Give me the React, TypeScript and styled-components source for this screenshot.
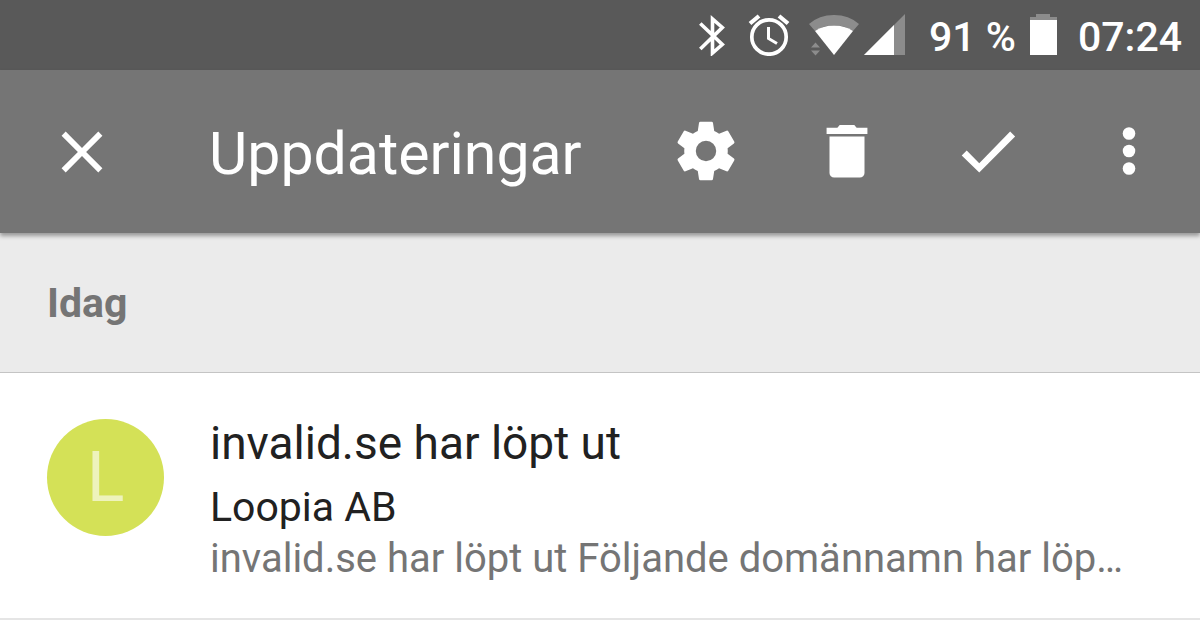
import React from "react";
import styled, { createGlobalStyle } from "styled-components";

const GlobalStyle = createGlobalStyle`
  *, *::before, *::after { box-sizing: border-box; }
  body {
    margin: 0;
    background: #fff;
    font-family: Roboto, "Liberation Sans", sans-serif;
  }
`;

const StatusBar = styled.header`
  display: flex;
  align-items: center;
  justify-content: flex-end;
  height: 70px;
  padding-right: 18px;
  background: #595959;
  color: #fff;
  font-size: 41px;
  font-weight: 500;
  line-height: 48px;
  white-space: nowrap;

  svg { display: block; flex: none; }
`;

const StatusIcon = styled.svg<{ $gap: number }>`
  margin-right: ${(p) => p.$gap}px;
`;

const StatusText = styled.span<{ $gap?: number }>`
  margin-right: ${(p) => p.$gap ?? 0}px;
  padding-top: 4px;
`;

const Toolbar = styled.nav`
  position: relative;
  display: flex;
  align-items: center;
  height: 163px;
  background: #757575;
  color: #fff;
  box-shadow: 0 3px 4px rgba(0, 0, 0, 0.35);
`;

const Title = styled.h1`
  flex: 1;
  min-width: 0;
  margin: 0;
  padding: 4px 0 0 46px;
  font-size: 59px;
  font-weight: 400;
  line-height: 68px;
`;

const Actions = styled.div`
  display: flex;
  padding: 0 1px 2px 0;
`;

const IconButton = styled.button<{ $width: number }>`
  display: flex;
  justify-content: center;
  flex: none;
  width: ${(p) => p.$width}px;
  padding: 0;
  border: 0;
  background: none;
  color: inherit;
  cursor: pointer;

  svg { display: block; width: 70px; height: 70px; fill: currentColor; }
`;

const SectionHeader = styled.h2`
  margin: 0;
  padding: 46px 47px 45px;
  background: #ebebeb;
  border-bottom: 1px solid #c4c4c4;
  color: #757575;
  font-size: 41px;
  font-weight: 700;
  line-height: 48px;
`;

const MailList = styled.ul`
  margin: 0;
  padding: 0;
  list-style: none;
`;

const MailRow = styled.li`
  display: flex;
  gap: 46px;
  padding: 42px 47px 33px;
  border-bottom: 2px solid #e5e5e5;
`;

const Avatar = styled.div`
  display: flex;
  align-items: center;
  justify-content: center;
  flex: none;
  width: 117px;
  height: 117px;
  margin-top: 4px;
  border-radius: 50%;
  background: #d4e157;
  color: rgba(255, 255, 255, 0.6);
  font-size: 70px;
  font-weight: 400;
  line-height: 117px;
`;

const MailBody = styled.div`
  flex: 1;
  min-width: 0;
`;

const Subject = styled.h3`
  margin: 0 0 10px;
  color: #212121;
  font-size: 46px;
  font-weight: 400;
  line-height: 56px;
`;

const MailLine = styled.p`
  overflow: hidden;
  margin: 0;
  color: #212121;
  font-size: 41px;
  line-height: 52px;
  text-overflow: ellipsis;
  white-space: nowrap;
`;

const Snippet = styled(MailLine)`
  color: #757575;
  font-size: 40px;
`;

const actions = [
  {
    label: "Inställningar",
    shape: (
      <path
        fillRule="evenodd"
        d="M10.100 2h3.800a.5.5 0 0 1 .5.420l.42 2.700c.6.240 1.150.560 1.660.950l2.550-1.020a.5.5 0 0 1 .6.220l2.050 3.500a.5.5 0 0 1-.1.640l-2.170 1.650a7.800 7.800 0 0 1 0 1.880l2.170 1.650a.5.5 0 0 1 .1.640l-2.050 3.500a.5.5 0 0 1-.6.220l-2.550-1.020c-.51.390-1.060.710-1.660.950l-.42 2.700a.5.5 0 0 1-.5.420h-3.800a.5.5 0 0 1-.5-.420l-.42-2.700a7 7 0 0 1-1.660-.950l-2.550 1.020a.5.5 0 0 1-.6-.220l-2.050-3.500a.5.5 0 0 1 .1-.640l2.170-1.650a7.800 7.800 0 0 1 0-1.880L2.420 9.410a.5.5 0 0 1-.1-.640l2.050-3.500a.5.5 0 0 1 .6-.220l2.550 1.020c.51-.390 1.060-.710 1.660-.950l.42-2.700A.5.5 0 0 1 10.100 2zM12 8.500a3.500 3.500 0 1 0 0 7 3.500 3.500 0 0 0 0-7z"
      />
    ),
  },
  {
    label: "Ta bort",
    shape: (
      <path d="M6 7h12v12.500a1.600 1.600 0 0 1-1.600 1.600H7.600A1.600 1.600 0 0 1 6 19.500zM5 4h3.700l.8-.9h5l.8.9H19v2.200H5z" />
    ),
  },
  {
    label: "Klar",
    shape: <path d="M9 16.170L4.700 11.870l-1.710 1.710L9 19.400 21.300 7 19.590 5.300z" />,
  },
  {
    label: "Fler alternativ",
    shape: (
      <>
        <circle cx="12" cy="6" r="2.150" />
        <circle cx="12" cy="12" r="2.150" />
        <circle cx="12" cy="18" r="2.150" />
      </>
    ),
  },
];

const mails = [
  {
    initial: "L",
    subject: "invalid.se har löpt ut",
    sender: "Loopia AB",
    snippet: "invalid.se har löpt ut Följande domännamn har löp…",
  },
];

function StatusIcons() {
  return (
    <>
      <StatusIcon $gap={22} width="28" height="42" viewBox="0 0 28 42" fill="none" stroke="#fff" strokeWidth="3.600">
        <path d="M2.300 9.500L24.300 30.500 14.500 39V5L24.300 13.500 2.300 35" />
      </StatusIcon>
      <StatusIcon $gap={19} width="42" height="42" viewBox="0 0 42 42" fill="none" stroke="#fff" strokeWidth="3.700">
        <circle cx="21" cy="23" r="17.200" />
        <path d="M20.500 13v11.500l8.500 5" strokeWidth="3" />
        <path d="M2 9.500L11 2M40 9.500L31 2" strokeWidth="4.200" />
      </StatusIcon>
      <StatusIcon $gap={5} width="50" height="42" viewBox="0 0 50 42">
        <path d="M0 10Q10 1 25 1T50 10L44 17Q25 5 6 17z" fill="#8c8c8c" />
        <path d="M6 17Q14 11.500 25 11.500T44 17L25 41z" fill="#fff" />
        <path d="M2 33.500h9L6.500 28.500zM2 36.500h9L6.500 41.500z" fill="#8c8c8c" />
      </StatusIcon>
      <StatusIcon $gap={24} width="41" height="42" viewBox="0 0 41 42">
        <path d="M41 0v41H0z" fill="#8c8c8c" />
        <path d="M30 11v30H0z" fill="#fff" />
      </StatusIcon>
    </>
  );
}

export default function App() {
  return (
    <>
      <GlobalStyle />
      <StatusBar>
        <StatusIcons />
        <StatusText $gap={14}>91 %</StatusText>
        <StatusIcon $gap={21} width="27" height="42" viewBox="0 0 27 42">
          <path d="M0 7V3h6V0h14v3h7v4z" fill="#8c8c8c" />
          <path d="M0 6h27v35H0z" fill="#fff" />
        </StatusIcon>
        <StatusText>07:24</StatusText>
      </StatusBar>
      <Toolbar>
        <IconButton $width={163} aria-label="Stäng">
          <svg viewBox="0 0 24 24">
            <path d="M19 6.410L17.590 5 12 10.590 6.410 5 5 6.410 10.590 12 5 17.590 6.410 19 12 13.410 17.590 19 19 17.590 13.410 12z" />
          </svg>
        </IconButton>
        <Title>Uppdateringar</Title>
        <Actions>
          {actions.map((a) => (
            <IconButton key={a.label} $width={141} aria-label={a.label}>
              <svg viewBox="0 0 24 24">{a.shape}</svg>
            </IconButton>
          ))}
        </Actions>
      </Toolbar>
      <main>
        <SectionHeader>Idag</SectionHeader>
        <MailList>
          {mails.map((m) => (
            <MailRow key={m.subject}>
              <Avatar>{m.initial}</Avatar>
              <MailBody>
                <Subject>{m.subject}</Subject>
                <MailLine>{m.sender}</MailLine>
                <Snippet>{m.snippet}</Snippet>
              </MailBody>
            </MailRow>
          ))}
        </MailList>
      </main>
    </>
  );
}
